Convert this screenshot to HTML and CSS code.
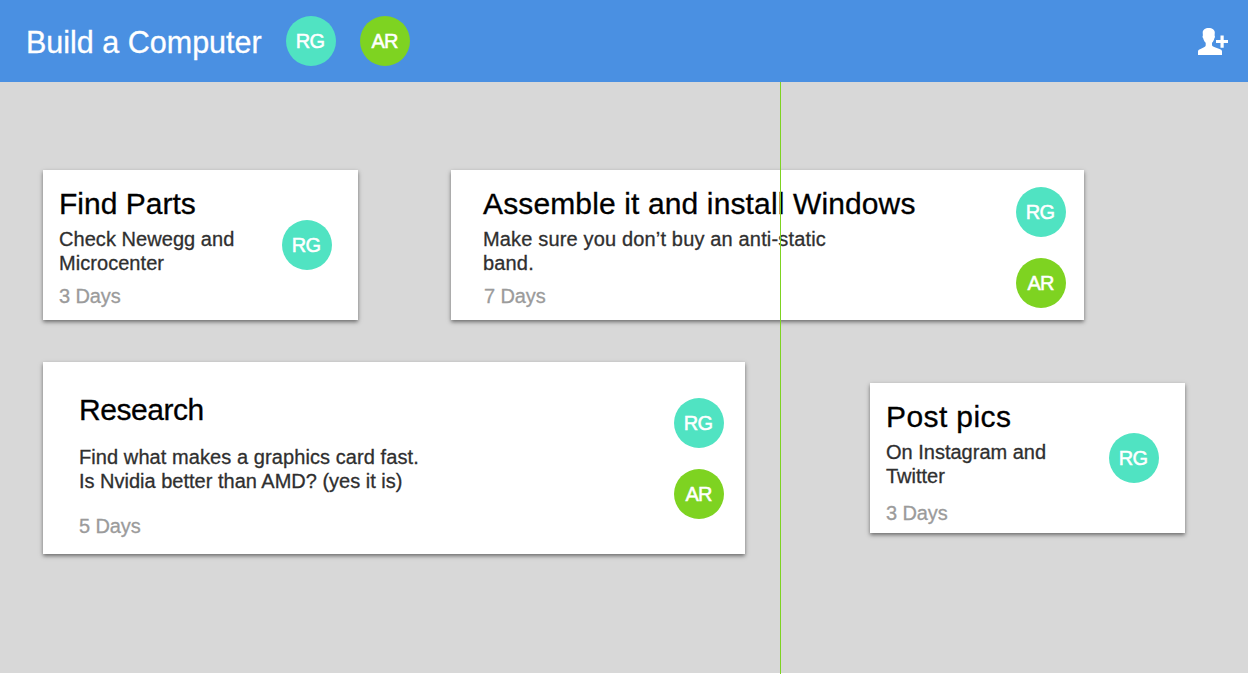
FILE: index.html
```html
<!DOCTYPE html>
<html lang="en">
<head>
<meta charset="utf-8">
<title>Build a Computer</title>
<link rel="stylesheet" href="styles.css">
</head>
<body>
<header class="topbar">
  <h1 class="project">Build a Computer</h1>
  <div class="members">
    <span class="avatar rg">RG</span>
    <span class="avatar ar">AR</span>
  </div>
  <svg class="add-person" viewBox="0 0 30 27" width="30" height="27" fill="#fff">
    <path d="M10.700 0C14.300 0 16.800 1.800 16.800 4.500L16.600 7.500C17.200 8 17 9.800 16.300 10.500C16 12.200 15.200 13.700 14 14.800V17.300C14.300 18.300 15.500 18.900 17.500 19.600L21.500 21C23.300 21.700 24 22.400 24 23.500V27H0V23.500C0 22.400 .7 21.700 2.500 21L5.500 19.600C7 18.900 7.600 18.300 7.700 17.300V14.800C6.500 13.700 5.600 12.200 5.300 10.500C4.500 9.800 4.300 8 4.900 7.500L4.700 4.500C4.700 1.800 7.100 0 10.700 0Z"/>
    <path d="M22.500 7.500H25.700V12H30V15H25.700V19.700H22.500V15H18V12H22.500Z"/>
  </svg>
</header>
<main class="board">
  <div class="today"></div>
  <div class="lane">
    <article class="card small find">
      <div class="info">
        <h2 class="title">Find Parts</h2>
        <p class="desc">Check Newegg and<br>Microcenter</p>
        <p class="days">3 Days</p>
      </div>
      <div class="people"><span class="avatar rg">RG</span></div>
    </article>
    <article class="card assemble">
      <div class="info">
        <h2 class="title">Assemble it and install Windows</h2>
        <p class="desc">Make sure you don’t buy an anti-static<br>band.</p>
        <p class="days">7 Days</p>
      </div>
      <div class="people"><span class="avatar rg">RG</span><span class="avatar ar">AR</span></div>
    </article>
  </div>
  <div class="lane">
    <article class="card research">
      <div class="info">
        <h2 class="title">Research</h2>
        <p class="desc">Find what makes a graphics card fast.<br><span class="tight">Is Nvidia better than AMD? (yes it is)</span></p>
        <p class="days">5 Days</p>
      </div>
      <div class="people"><span class="avatar rg">RG</span><span class="avatar ar">AR</span></div>
    </article>
    <article class="card small post">
      <div class="info">
        <h2 class="title">Post pics</h2>
        <p class="desc">On Instagram and<br>Twitter</p>
        <p class="days">3 Days</p>
      </div>
      <div class="people"><span class="avatar rg">RG</span></div>
    </article>
  </div>
</main>
</body>
</html>
```
FILE: styles.css
```css
* { box-sizing: border-box; margin: 0; padding: 0; }

body {
  font-family: "Liberation Sans", Arial, sans-serif;
  background: #fff;
  width: 1248px;
  height: 674px;
  overflow: hidden;
}

.topbar {
  display: flex;
  align-items: center;
  height: 82px;
  padding: 0 20px 0 26px;
  background: #4a90e2;
  color: #fff;
}

.project {
  width: 260px;
  padding-top: 1px;
  font-size: 30.500px;
  font-weight: 400;
  line-height: 36px;
  white-space: nowrap;
  -webkit-text-stroke: 0.3px currentColor;
}

.members { display: flex; gap: 24px; }
.add-person { margin-left: auto; }

.avatar {
  display: flex;
  align-items: center;
  justify-content: center;
  width: 50px;
  height: 50px;
  padding-right: 2px;
  border-radius: 50%;
  color: #fff;
  font-size: 20px;
  line-height: 24px;
  letter-spacing: -0.8px;
  -webkit-text-stroke: 0.5px #fff;
}
.rg { background: #50e3c2; }
.ar { background: #7ed321; }
.ar { padding-right: 1px; }

.board {
  position: relative;
  display: flex;
  flex-direction: column;
  gap: 42px;
  height: 591px;
  padding: 88px 63px 0 43px;
  background: #d8d8d8;
}

/* Marks the current day across every lane */
.today {
  position: absolute;
  z-index: 1;
  top: 0;
  bottom: -1px;
  left: 780px;
  width: 1px;
  background: #7ed321;
}

.lane { display: flex; align-items: flex-start; }

.card {
  display: flex;
  justify-content: space-between;
  height: 150px;
  background: #fff;
  box-shadow: 0 2px 4px rgba(0, 0, 0, 0.5);
}

.title {
  font-size: 30px;
  font-weight: 400;
  line-height: 36px;
  color: #000;
  white-space: nowrap;
  -webkit-text-stroke: 0.3px currentColor;
}
.desc {
  margin-top: 5px;
  font-size: 20px;
  line-height: 24px;
  letter-spacing: 0.05px;
  color: #2f2f2f;
  white-space: nowrap;
  -webkit-text-stroke: 0.3px currentColor;
}
.days {
  margin-top: 9px;
  font-size: 20px;
  line-height: 24px;
  letter-spacing: -0.1px;
  color: #9b9b9b;
  -webkit-text-stroke: 0.3px currentColor;
}

.people { display: flex; flex-direction: column; gap: 21px; }

.small { width: 315px; padding: 16px 26px 0 16px; }
.small .people { padding-top: 34px; }

.assemble { width: 633px; margin-left: 93px; padding: 16px 18px 0 32px; }
.assemble .title { letter-spacing: 0.13px; }
.assemble .desc { letter-spacing: 0.16px; }
.assemble .days { padding-left: 1px; }
.assemble .people { padding-top: 1px; }

.research { width: 702px; height: 192px; padding: 30px 21px 0 36px; }
.research .title { letter-spacing: -0.45px; }
.research .desc { margin-top: 17px; letter-spacing: 0.08px; }
.research .tight { letter-spacing: 0; }
.research .days { margin-top: 21px; }
.research .people { padding-top: 6px; }

.post { margin: 21px 0 0 125px; }
.post .title { letter-spacing: 0.4px; }
.post .desc { letter-spacing: 0; }
.post .days { margin-top: 13px; }
```
